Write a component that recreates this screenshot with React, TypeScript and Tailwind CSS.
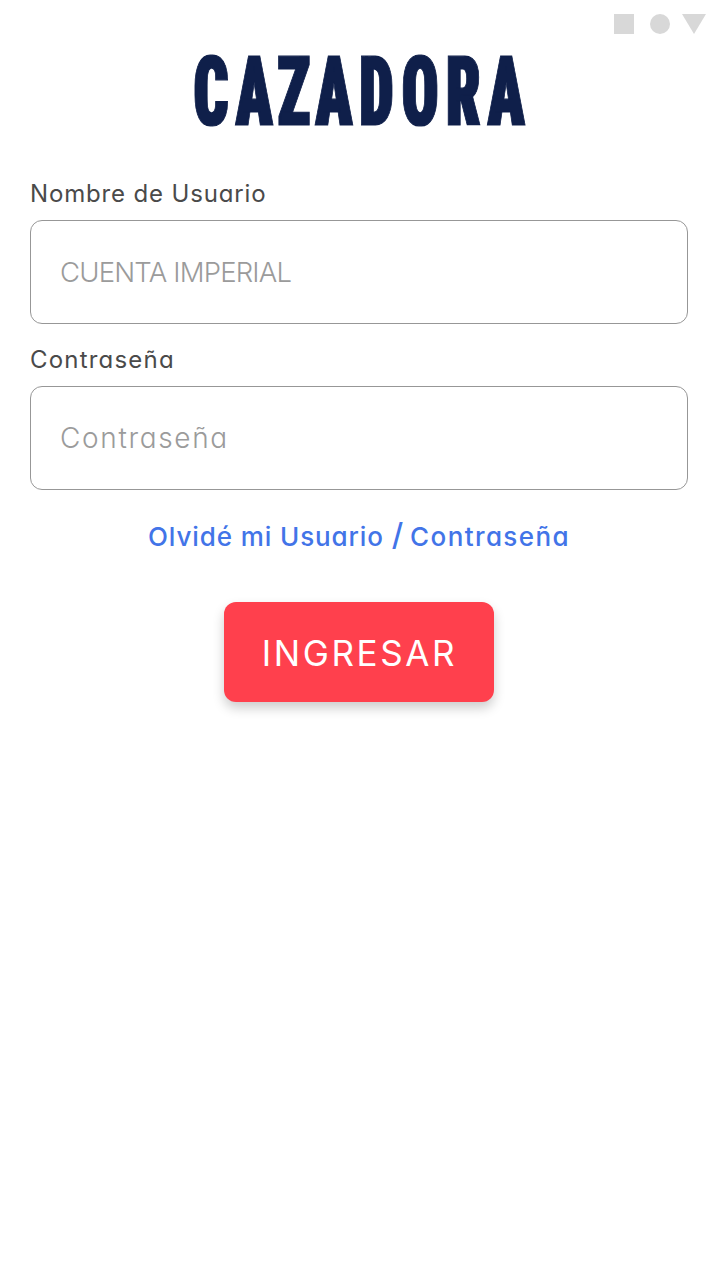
import React from "react";

function SystemIcons() {
  return (
    <svg className="block h-5 w-[92px]" viewBox="0 0 92 20" fill="#d8d8d8" aria-hidden="true">
      <rect width="20" height="20" />
      <circle cx="46" cy="10" r="10" />
      <path d="M68 0h24L80 20z" />
    </svg>
  );
}

function Logo() {
  return (
    <svg className="block h-[80px] w-[340px] overflow-visible" viewBox="0 0 340 80" role="img" aria-label="CAZADORA">
      <filter id="widen" filterUnits="userSpaceOnUse" x="-10" y="-10" width="360" height="100" colorInterpolationFilters="sRGB">
        <feMorphology operator="dilate" radius="1 0" />
      </filter>
      <g filter="url(#widen)">
        <text
          transform="scale(0.62 1)"
          x="5.9 74 141.5 203 273.5 342 413.5 480.5"
          y="74.4"
          strokeWidth="1.2"
          className="fill-[#0f1f4a] stroke-[#0f1f4a] font-['Roboto_Condensed',Roboto,sans-serif] text-[97px] font-black [font-stretch:75%]"
        >
          CAZADORA
        </text>
      </g>
    </svg>
  );
}

interface FieldProps {
  id: string;
  label: string;
  placeholder: string;
  type: string;
  labelClass: string;
  inputClass: string;
}

function Field({ id, label, placeholder, type, labelClass, inputClass }: FieldProps) {
  return (
    <div className="flex flex-col">
      <label htmlFor={id} className={`h-[42px] pt-px text-[24px] leading-[30px] text-[#4a4a4a] ${labelClass}`}>
        {label}
      </label>
      <input
        id={id}
        type={type}
        placeholder={placeholder}
        className={`h-[104px] w-full rounded-[12px] border border-[#979797] bg-white px-[29px] font-light text-[#4a4a4a] outline-none placeholder:text-[#9b9b9b] ${inputClass}`}
      />
    </div>
  );
}

export default function App() {
  return (
    <main className="flex h-[1280px] w-[720px] flex-col bg-white font-['Inter',sans-serif] [font-feature-settings:'cv11']">
      <header className="flex flex-col">
        <div className="flex justify-end pt-[14px] pr-[14px]">
          <SystemIcons />
        </div>
        <h1 className="mt-[17px] flex justify-center">
          <Logo />
        </h1>
      </header>
      <form className="mt-[47px] flex flex-col pr-[32px] pl-[30px]" onSubmit={(e) => e.preventDefault()}>
        <div className="flex flex-col gap-5">
          <Field
            id="user"
            label="Nombre de Usuario"
            placeholder="CUENTA IMPERIAL"
            type="text"
            labelClass="tracking-[0.85px]"
            inputClass="text-[27.5px] tracking-[-0.8px]"
          />
          <Field
            id="password"
            label="Contraseña"
            placeholder="Contraseña"
            type="password"
            labelClass="tracking-[1.2px]"
            inputClass="text-[28px] tracking-[1.65px]"
          />
        </div>
        <a href="#" className="mt-[29px] h-[34px] self-center text-[26px] leading-[34px] font-medium tracking-[0.9px] whitespace-nowrap text-[#4274e8]">
          Olvidé mi Usuario <span className="text-[31px] leading-none tracking-[-1px]">/</span>{" "}
          <span className="tracking-[1.4px]">Contraseña</span>
        </a>
        <button
          type="submit"
          className="mt-[49px] h-[100px] w-[270.5px] self-center rounded-[12px] bg-[#ff404d] pt-0.5 pl-px text-[35px] tracking-[2.6px] text-white shadow-[0_6px_12px_rgba(0,0,0,0.2)]"
        >
          INGRESAR
        </button>
      </form>
    </main>
  );
}
